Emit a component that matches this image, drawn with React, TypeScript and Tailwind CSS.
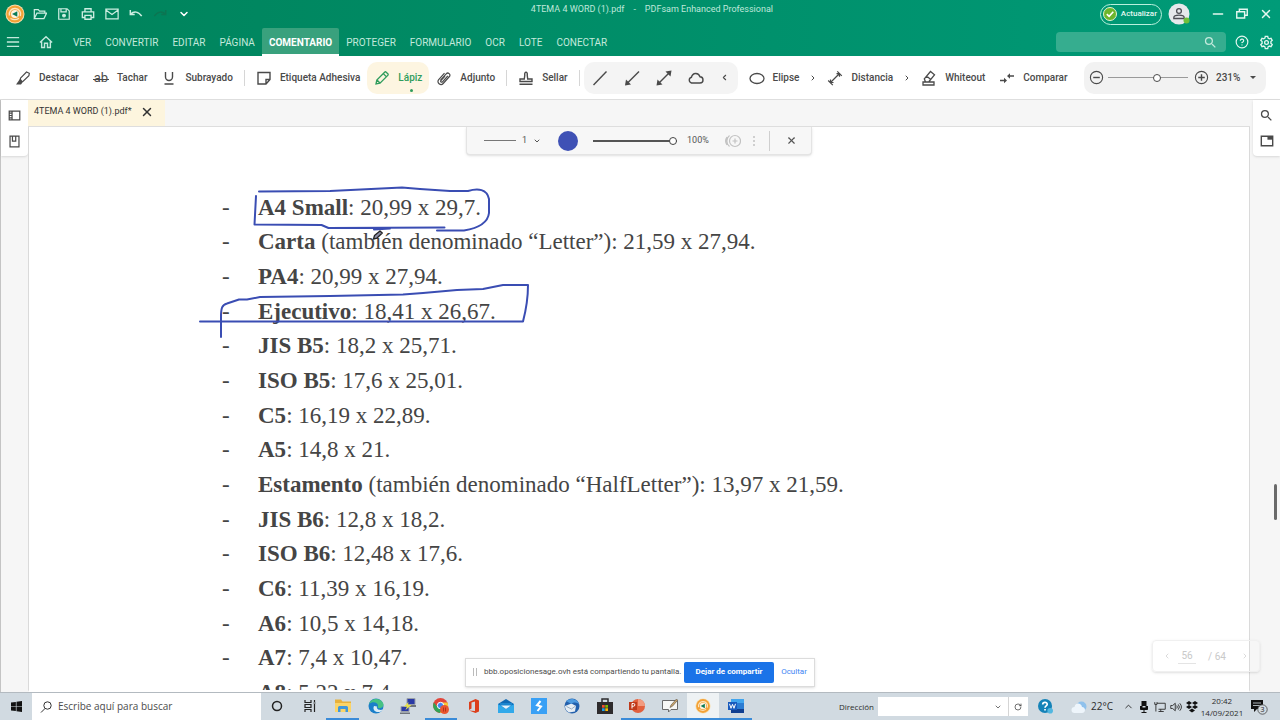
import React, { useState } from 'react';
import {
  ChevronDown,
  ChevronLeft,
  ChevronRight,
  ChevronUp,
  CircleHelp,
  Minus,
  RotateCw,
  X,
} from 'lucide-react';
import { MdSearch } from 'react-icons/md';

interface IIcon {
  children: React.ReactNode;
  className?: string;
}

interface ITool {
  label: string;
  icon: React.ReactNode;
  active?: boolean;
}

interface IPaperSize {
  name: string;
  text: string;
}

const menus = [
  'VER',
  'CONVERTIR',
  'EDITAR',
  'PÁGINA',
  'COMENTARIO',
  'PROTEGER',
  'FORMULARIO',
  'OCR',
  'LOTE',
  'CONECTAR',
];

const paperSizes: IPaperSize[] = [
  { name: 'A4 Small', text: ': 20,99 x 29,7.' },
  { name: 'Carta', text: ' (también denominado “Letter”): 21,59 x 27,94.' },
  { name: 'PA4', text: ': 20,99 x 27,94.' },
  { name: 'Ejecutivo', text: ': 18,41 x 26,67.' },
  { name: 'JIS B5', text: ': 18,2 x 25,71.' },
  { name: 'ISO B5', text: ': 17,6 x 25,01.' },
  { name: 'C5', text: ': 16,19 x 22,89.' },
  { name: 'A5', text: ': 14,8 x 21.' },
  {
    name: 'Estamento',
    text: ' (también denominado “HalfLetter”): 13,97 x 21,59.',
  },
  { name: 'JIS B6', text: ': 12,8 x 18,2.' },
  { name: 'ISO B6', text: ': 12,48 x 17,6.' },
  { name: 'C6', text: ': 11,39 x 16,19.' },
  { name: 'A6', text: ': 10,5 x 14,18.' },
  { name: 'A7', text: ': 7,4 x 10,47.' },
  { name: 'A8', text: ': 5,22 x 7,4.' },
];

const Icon: React.FC<IIcon> = ({ children, className = 'size-4' }) => (
  <svg
    viewBox="0 0 16 16"
    fill="none"
    stroke="currentColor"
    strokeWidth="1.2"
    className={`${className} flex-none`}
    aria-hidden="true"
  >
    {children}
  </svg>
);

const SamLogo: React.FC<{ className: string }> = ({ className }) => (
  <svg viewBox="0 0 20 20" className={className} aria-hidden="true">
    <circle cx="10" cy="10" r="9.5" fill="#f8dfae" />
    <circle cx="10" cy="10" r="8.6" fill="#f3a136" />
    <path
      d="M4.500 11.500a5.500 5.500 0 0 1 5.500-7a5.500 5.500 0 0 1 5.300 7.500"
      fill="none"
      stroke="#fbe6c2"
      strokeWidth="1.5"
    />
    <path d="M5.500 14.500q4.500 2.500 8.500-.3" fill="none" stroke="#fbe6c2" strokeWidth="1.2" />
    <circle cx="10" cy="10" r="4" fill="#fdf3df" />
    <path d="M12.300 7.200v5.600L7 10z" fill="#0b7a58" />
  </svg>
);

const Tool: React.FC<ITool> = ({ label, icon, active }) => (
  <button
    type="button"
    className={`relative flex h-8 flex-none items-center gap-2 rounded-[10px] px-[7px] text-[10px] font-medium ${
      active ? 'bg-[#fdf5e1] text-[#2f9c5c]' : 'text-[#4a4a4a]'
    }`}
  >
    {icon}
    {label}
    {active && (
      <span className="absolute right-4 bottom-0.5 size-[3px] rounded-full bg-[#2f9c5c]"></span>
    )}
  </button>
);

const Divider = () => <span className="mx-1 h-4 w-px flex-none bg-[#d6d6d6]"></span>;

const More: React.FC<{ label: string }> = ({ label }) => (
  <button
    type="button"
    aria-label={label}
    className="flex h-8 w-3.5 flex-none items-center justify-center"
  >
    <ChevronRight size={8} strokeWidth={3} />
  </button>
);

const TitleBar = () => (
  <div className="flex h-7 items-center">
    <div className="flex w-[204px] flex-none items-center pl-px text-[#cdeee2]">
      <span className="flex w-[27px] justify-center">
        <SamLogo className="size-5" />
      </span>
      <button type="button" aria-label="Abrir" className="flex w-6 justify-center">
        <Icon className="size-3.5">
          <path d="M1.500 13V3h4.500l1.500 1.700h6V7M1.500 13.200l3-6.200h11l-3 6.200z" strokeWidth="1.4" />
        </Icon>
      </button>
      <button type="button" aria-label="Guardar" className="flex w-6 justify-center">
        <Icon className="size-3.5">
          <path d="M2 2h9.500L14 4.500V14H2zM4.500 2v3.500h6V2" strokeWidth="1.4" />
          <circle cx="8" cy="9.800" r="1.600" fill="currentColor" />
        </Icon>
      </button>
      <button type="button" aria-label="Imprimir" className="flex w-6 justify-center">
        <Icon className="size-3.5">
          <path
            d="M4.500 5V2h7v3M4.500 12H1.500V5.500h13V12h-3M4.500 9.500h7V14h-7z"
            strokeWidth="1.5"
          />
        </Icon>
      </button>
      <button type="button" aria-label="Correo" className="flex w-6 justify-center">
        <Icon className="size-3.5">
          <path d="M1 2.500h14v11H1zM1 3.500l7 5 7-5" strokeWidth="1.4" />
        </Icon>
      </button>
      <button type="button" aria-label="Deshacer" className="flex w-6 justify-center">
        <Icon className="size-3.5">
          <path d="M1.500 3.500v5h5M2 8c3.500-3.500 9-3 12.500 2.500" strokeWidth="1.7" />
        </Icon>
      </button>
      <button
        type="button"
        aria-label="Rehacer"
        disabled
        className="flex w-6 justify-center text-[#0c7552]"
      >
        <Icon className="size-3.5">
          <path d="M14.500 3.500v5h-5M14 8C10.500 4.500 5 5 1.500 10.500" strokeWidth="1.7" />
        </Icon>
      </button>
      <button
        type="button"
        aria-label="Personalizar"
        className="flex w-6 justify-center text-white"
      >
        <ChevronDown size={12} strokeWidth={3} />
      </button>
    </div>
    <h1 className="flex-1 pb-2 text-center text-[9px] whitespace-pre text-[#bfe8da]">
      4TEMA 4 WORD (1).pdf{'    -    '}PDFsam Enhanced Professional
    </h1>
    <div className="flex flex-none items-center text-[#e4f7f0]">
      <button
        type="button"
        className="flex h-[21px] items-center gap-1 rounded-full border border-[#b9f0dd] pr-1 pl-0.5 text-[8px] font-medium"
      >
        <svg viewBox="0 0 14 14" className="size-3.5" aria-hidden="true">
          <circle cx="7" cy="7" r="6.500" fill="#6db52c" stroke="#e2f3d2" />
          <path
            d="M3.800 7.200l2.300 2.200 4.200-4.700"
            fill="none"
            stroke="#fff"
            strokeWidth="1.6"
          />
        </svg>
        Actualizar
      </button>
      <button type="button" aria-label="Cuenta" className="ml-[5px] flex w-[23px] justify-center">
        <svg viewBox="0 0 22 22" className="size-[22px]" aria-hidden="true">
          <circle cx="11" cy="11" r="10.500" fill="#e6e8ec" />
          <circle cx="11" cy="8" r="2.400" fill="none" stroke="#4d4d55" strokeWidth="1.3" />
          <path
            d="M5.800 15.500v-.8c0-1.800 3-2.600 5.200-2.600s5.200.8 5.200 2.600v.8z"
            fill="none"
            stroke="#4d4d55"
            strokeWidth="1.3"
          />
          <circle cx="18.500" cy="17.500" r="3" fill="#6fbf3a" />
        </svg>
      </button>
      <button type="button" aria-label="Minimizar" className="ml-4 flex w-6 justify-center">
        <Minus size={16} strokeWidth={2} />
      </button>
      <button type="button" aria-label="Restaurar" className="flex w-6 justify-center">
        <Icon className="size-3.5">
          <path d="M5 5V2.500h9v7h-2.500M2 5.500h9v7H2z" strokeWidth="1.6" />
        </Icon>
      </button>
      <button type="button" aria-label="Cerrar" className="mr-0.5 flex w-6 justify-center">
        <X size={14} strokeWidth={2.5} />
      </button>
    </div>
  </div>
);

const MenuBar = () => {
  const [current, setCurrent] = useState('COMENTARIO');

  return (
    <nav className="flex h-7 items-center text-[10px] text-[#c3e9dc]">
      <button type="button" aria-label="Menú" className="flex w-[26px] justify-center">
        <Icon className="size-3.5">
          <path d="M1 3h14M1 8h14M1 13h14" strokeWidth="1.5" />
        </Icon>
      </button>
      <button type="button" aria-label="Inicio" className="flex w-10 justify-center">
        <Icon className="size-3.5">
          <path
            d="M1 8.500L8 2l7 6.500M3 7v7.300h3.300V9.500h3.400v4.800H13V7"
            strokeWidth="1.6"
          />
        </Icon>
      </button>
      {menus.map((menu) => (
        <button
          key={menu}
          type="button"
          onClick={() => setCurrent(menu)}
          className={`h-7 border-b-2 px-[7px] pt-0.5 ${
            current === menu
              ? 'rounded-t-xs border-white bg-[#39a17d] font-bold text-white'
              : 'border-transparent'
          }`}
        >
          {menu}
        </button>
      ))}
      <div className="ml-auto flex h-5 w-[170px] items-center rounded-sm bg-[#36ad8f] pr-2">
        <input
          type="text"
          aria-label="Buscar herramienta"
          className="min-w-0 flex-1 bg-transparent px-2 outline-none"
        />
        <MdSearch size={15} />
      </div>
      <button
        type="button"
        aria-label="Ayuda"
        className="ml-1 flex w-6 justify-center text-[#e4f7f0]"
      >
        <CircleHelp size={14} strokeWidth={2} />
      </button>
      <button
        type="button"
        aria-label="Ajustes"
        className="mr-0.5 flex w-6 justify-center text-[#e4f7f0]"
      >
        <Icon className="size-[15px]">
          <path
            d="M6.700 1.500h2.600l.4 1.900 1.300.7 1.800-.6 1.300 2.200-1.400 1.300v1.900l1.400 1.300-1.300 2.200-1.800-.6-1.300.8-.4 1.900H6.700l-.4-1.900-1.300-.8-1.800.6-1.300-2.200 1.400-1.300V7L1.900 5.700l1.300-2.200 1.800.6 1.300-.7z"
            strokeWidth="1.4"
          />
          <circle cx="8" cy="8" r="2" strokeWidth="1.4" />
        </Icon>
      </button>
    </nav>
  );
};

const CommentTools = () => (
  <div className="flex h-11 items-center border-b border-[#dedede] bg-white pl-2 text-[#4a4a4a]">
    <Tool
      label="Destacar"
      icon={
        <Icon>
          <path d="M5.500 8.200L11.500 2l2.800 1.300-.4 2.500-6 5.700-3 .3z" />
          <path d="M5.300 8.500L1 14.500h5l2-2.700z" fill="currentColor" stroke="none" />
        </Icon>
      }
    />
    <Tool
      label="Tachar"
      icon={
        <span
          className="relative flex w-4 justify-center text-[13px] leading-4 font-normal"
          aria-hidden="true"
        >
          ab
          <span className="absolute inset-x-0 top-[9px] h-px bg-[#4a4a4a]"></span>
        </span>
      }
    />
    <Tool
      label="Subrayado"
      icon={
        <Icon>
          <path d="M4.500 2v5a3.500 3.500 0 0 0 7 0V2M3.500 14h9" strokeWidth="1.4" />
        </Icon>
      }
    />
    <Divider />
    <Tool
      label="Etiqueta Adhesiva"
      icon={
        <Icon>
          <path d="M2 2.500h12v7L10 14H2zM14 9.500h-4V14" strokeWidth="1.4" />
        </Icon>
      }
    />
    <Tool
      label="Lápiz"
      active
      icon={
        <Icon>
          <path
            d="M2 14l.8-4L10.600 2.200q.8-.8 1.600 0l1.600 1.600q.8.800 0 1.600L6 13.200zM9.300 3.600l3.100 3.100M3 10l3 3"
            strokeWidth="1.3"
          />
        </Icon>
      }
    />
    <Tool
      label="Adjunto"
      icon={
        <Icon>
          <path d="M4.500 10.200l5.700-6.400c1.800-2 5 .6 3.200 2.700l-6.200 7c-2.500 2.800-7-.8-4.500-3.800L8.500 3.200M11.800 5.800l-5.300 6c-.9 1-2.500-.2-1.600-1.300L9 6" />
        </Icon>
      }
    />
    <Divider />
    <Tool
      label="Sellar"
      icon={
        <Icon>
          <path
            d="M6.300 9l.5-4c-.9-3.600 3.300-3.600 2.400 0l.5 4h4.300v2.500H2V9zM1.500 14.300h13"
            strokeWidth="1.4"
          />
        </Icon>
      }
    />
    <Divider />
    <div className="flex h-8 flex-none items-center rounded-[10px] bg-[#f4f4f4]">
      <button type="button" aria-label="Línea" className="flex w-8 justify-center">
        <Icon>
          <path d="M1.500 15L14.500 1.500" strokeWidth="1.4" />
        </Icon>
      </button>
      <button type="button" aria-label="Flecha" className="flex w-8 justify-center">
        <Icon>
          <path d="M2 14.500L15 1.500" strokeWidth="1.4" />
          <path d="M1 15.500l1-6 5 5z" fill="currentColor" stroke="none" />
        </Icon>
      </button>
      <button type="button" aria-label="Flecha doble" className="flex w-8 justify-center">
        <Icon>
          <path d="M2 14L14 2" strokeWidth="1.4" />
          <path
            d="M.5 15.500l1-6 5 5zM15.500.5l-1 6-5-5z"
            fill="currentColor"
            stroke="none"
          />
        </Icon>
      </button>
      <button type="button" aria-label="Nube" className="flex w-8 justify-center">
        <Icon>
          <path
            d="M3.500 13a3 3 0 0 1 0-5.800C4.500 2.500 10.500 2 12 6.800c4 .2 4 6.200 0 6.200z"
            strokeWidth="1.4"
          />
        </Icon>
      </button>
      <button
        type="button"
        aria-label="Menos formas"
        className="flex w-[26px] justify-center"
      >
        <ChevronLeft size={9} strokeWidth={3} />
      </button>
    </div>
    <span className="w-1 flex-none"></span>
    <Tool
      label="Elipse"
      icon={
        <Icon>
          <ellipse cx="8" cy="8.500" rx="7" ry="5" strokeWidth="1.3" />
        </Icon>
      }
    />
    <More label="Más formas" />
    <Tool
      label="Distancia"
      icon={
        <Icon>
          <path d="M4 12l8-8M1.200 10.500l4.600 4.600M10.300 1.300l4.500 4.500M3.500 9.500v3h3M9.500 3.700h3v3" />
        </Icon>
      }
    />
    <More label="Más medidas" />
    <Tool
      label="Whiteout"
      icon={
        <Icon>
          <path
            d="M2 12h11v3H2zM4.500 12L3.300 8.800 9.500 1.500l4 3.300L8 11.500M5.500 6l4.300 3.500"
            strokeWidth="1.3"
          />
        </Icon>
      }
    />
    <Tool
      label="Comparar"
      icon={
        <Icon>
          <path d="M1 10.500h5M15 6h-5" strokeWidth="1.4" />
          <path
            d="M5 7.700l3 2.800-3 2.800zM11 3.200L8 6l3 2.800z"
            fill="currentColor"
            stroke="none"
          />
        </Icon>
      }
    />
    <div className="mr-3.5 ml-auto flex h-8 w-[182px] flex-none items-center rounded-[10px] bg-[#f2f2f2] pr-1 text-[10px]">
      <button type="button" aria-label="Alejar" className="flex w-6 justify-center">
        <Icon className="size-[15px]">
          <circle cx="8" cy="8" r="6.500" />
          <path d="M4.500 8h7" strokeWidth="1.5" />
        </Icon>
      </button>
      <input
        type="range"
        aria-label="Zoom"
        defaultValue={63}
        className="h-px w-20 appearance-none bg-[#9a9a9a] [&::-webkit-slider-thumb]:size-2 [&::-webkit-slider-thumb]:appearance-none [&::-webkit-slider-thumb]:rounded-full [&::-webkit-slider-thumb]:border [&::-webkit-slider-thumb]:border-[#4a4a4a] [&::-webkit-slider-thumb]:bg-white"
      />
      <button type="button" aria-label="Acercar" className="ml-1 flex w-[18px] justify-center">
        <Icon className="size-[15px]">
          <circle cx="8" cy="8" r="6.500" />
          <path d="M4.500 8h7M8 4.500v7" strokeWidth="1.5" />
        </Icon>
      </button>
      <button
        type="button"
        className="flex flex-1 items-center justify-between px-1.5 font-medium"
      >
        231%
        <svg viewBox="0 0 8 4" className="h-[3px] w-1.5" aria-hidden="true">
          <path d="M0 0h8L4 4z" fill="currentColor" />
        </svg>
      </button>
    </div>
  </div>
);

const PenOptions = () => (
  <div className="absolute top-0 left-1/2 flex h-7 w-[346px] -translate-x-1/2 items-center rounded-b-sm border border-t-0 border-[#e4e4e4] bg-[#f7f7f7] text-[9px] text-[#555] shadow-sm">
    <button type="button" aria-label="Grosor 1" className="ml-[17px] flex items-center gap-1.5">
      <span className="h-px w-8 bg-[#777]"></span>
      <span>1</span>
      <ChevronDown size={8} strokeWidth={3} />
    </button>
    <button
      type="button"
      aria-label="Color"
      className="ml-[17px] size-5 flex-none rounded-full bg-[#3f51b5]"
    ></button>
    <input
      type="range"
      aria-label="Opacidad"
      defaultValue={100}
      className="ml-[15px] h-0.5 w-[84px] appearance-none bg-[#555] [&::-webkit-slider-thumb]:size-2 [&::-webkit-slider-thumb]:appearance-none [&::-webkit-slider-thumb]:rounded-full [&::-webkit-slider-thumb]:border [&::-webkit-slider-thumb]:border-[#444] [&::-webkit-slider-thumb]:bg-white"
    />
    <span className="ml-2.5">100%</span>
    <button type="button" disabled aria-label="Añadir favorito" className="ml-4 text-[#c2c2c2]">
      <Icon>
        <circle cx="10" cy="8" r="5.500" />
        <path d="M7.500 8h5M10 5.500v5M4.500 2.500a7 7 0 0 0 0 11M2 4a7 7 0 0 0 0 8" />
      </Icon>
    </button>
    <span className="ml-3 flex flex-col gap-0.5">
      <span className="size-0.5 bg-[#cfcfcf]"></span>
      <span className="size-0.5 bg-[#cfcfcf]"></span>
      <span className="size-0.5 bg-[#cfcfcf]"></span>
    </span>
    <span className="ml-3.5 h-5 w-px bg-[#cfcfcf]"></span>
    <button type="button" aria-label="Cerrar opciones" className="ml-4">
      <X size={11} strokeWidth={2.5} />
    </button>
  </div>
);

// hand drawn marks of the presenter, plus the pencil pointer
const Annotations = () => (
  <svg
    viewBox="0 0 360 170"
    className="absolute top-[53px] left-[161px] h-[170px] w-[360px]"
    fill="none"
    stroke="#3a4db3"
    strokeWidth="2"
    strokeLinecap="round"
    strokeLinejoin="round"
    aria-hidden="true"
  >
    <path d="M69 11.500L140 11l72-3.500 18 1.500 30 2h18c10-3 19-2 21 8v14c-1 9-10 15-25 17.500h-27" />
    <path d="M66 16l-1.500 28.500 67 .5 7 3 116-.500M184 49.500l16-1" />
    <path d="M31 157v-20c0-9 1-12 6-13.500l12-4h8l13-2.500 70-1 73-1.500 20-1.500 34-3 26-1 20-4h25c0 13-2 25-5 36.500H10" />
    <path
      d="M183.500 59l1-3.500 5.500-4.500 2.300 2-5.300 5z"
      stroke="#222"
      strokeWidth="1.3"
      fill="#8c8ea8"
    />
  </svg>
);

const SharingNotice = () => (
  <div className="absolute bottom-[5px] left-1/2 flex h-[29px] w-[350px] -translate-x-1/2 items-center border border-[#dcdcdc] bg-white pb-px text-[8px] whitespace-nowrap text-[#4c4c4c] shadow">
    <span className="mx-[7px] h-2 w-1 border-x border-[#bbb]"></span>
    <p className="flex-1">bbb.oposicionesage.ovh está compartiendo tu pantalla.</p>
    <button
      type="button"
      className="h-[21px] w-[90px] flex-none rounded-xs bg-[#1a73e8] font-bold text-white"
    >
      Dejar de compartir
    </button>
    <button type="button" className="w-10 flex-none text-[#4285f4]">
      Ocultar
    </button>
  </div>
);

const PageNavigator = () => (
  <div className="absolute right-5 bottom-5 flex h-8 w-[108px] items-center justify-between rounded-sm border border-[#f0f0f0] px-2.5 text-[10px] text-[#c9c9c9] shadow-sm">
    <button type="button" aria-label="Página anterior">
      <ChevronLeft size={8} />
    </button>
    <label className="flex items-center gap-3">
      <input
        type="text"
        aria-label="Página"
        defaultValue="56"
        className="w-[18px] border-b border-[#e4e4e4] bg-transparent text-center outline-none"
      />
      <span>/ 64</span>
    </label>
    <button type="button" aria-label="Página siguiente" className="ml-2">
      <ChevronRight size={8} />
    </button>
  </div>
);

const Workspace = () => (
  <main className="relative flex min-h-0 flex-1 border-b border-[#b3bac0] bg-[#f6f6f6]">
    <aside className="w-7 flex-none border-l border-[#c4c4c4]">
      <div className="flex h-14 flex-col items-center justify-around rounded-br-sm bg-white py-0.5 text-[#4a4a4a] shadow">
        <button type="button" aria-label="Panel de páginas">
          <Icon className="size-[13px]">
            <path
              d="M1.500 2.500h13v11h-13zM5 2.500v11M1.500 5h3M1.500 8h3M1.500 11h3"
              strokeWidth="1.5"
            />
          </Icon>
        </button>
        <button type="button" aria-label="Marcadores">
          <Icon className="size-[13px]">
            <path d="M2.500 1.500h11v13h-11zM5.500 1.500v6h4v-6" strokeWidth="1.5" />
          </Icon>
        </button>
      </div>
    </aside>
    <section className="flex min-w-0 flex-1 flex-col">
      <div className="flex h-[27px] flex-none border-b border-[#dedede]">
        <div className="flex w-[137px] items-center gap-2 bg-[#fdf5de] pb-0.5 pl-1.5 text-[9px] text-[#333]">
          4TEMA 4 WORD (1).pdf*
          <button type="button" aria-label="Cerrar pestaña">
            <X size={14} strokeWidth={2.5} />
          </button>
        </div>
      </div>
      <div className="relative min-h-0 flex-1 overflow-hidden border-x border-b-2 border-x-[#dadada] border-b-white bg-white">
        <ul className="mt-[63px] ml-[193px] grid h-[520px] grid-rows-15 font-['Palatino_Linotype','Liberation_Serif',serif] text-[23px] leading-none text-[#454545]">
          {paperSizes.map(({ name, text }) => (
            <li key={name} className="flex items-center whitespace-pre">
              <span className="w-9">-</span>
              <p>
                <b>{name}</b>
                {text}
              </p>
            </li>
          ))}
        </ul>
        <Annotations />
        <PenOptions />
      </div>
    </section>
    <aside className="w-[30px] flex-none">
      <div className="ml-[3px] flex h-14 flex-col items-center justify-around rounded-bl-sm bg-white py-0.5 text-[#4a4a4a] shadow">
        <button type="button" aria-label="Buscar en el documento">
          <MdSearch size={15} />
        </button>
        <button type="button" aria-label="Panel de propiedades">
          <Icon className="size-3.5">
            <path d="M1.500 2.500h13v11h-13z" strokeWidth="1.6" />
            <path d="M8.500 2.500h6V6.500h-6z" fill="currentColor" stroke="none" />
          </Icon>
        </button>
      </div>
    </aside>
    <span className="absolute right-[3px] bottom-[172px] h-9 w-[3px] rounded-full bg-[#6a6a6a]"></span>
    <SharingNotice />
    <PageNavigator />
  </main>
);

interface ITaskApp {
  name: string;
  drawing: React.ReactNode;
  open?: boolean;
  focused?: boolean;
}

const taskApps: ITaskApp[] = [
  {
    name: 'Cortana',
    drawing: <circle cx="8" cy="8" r="4.500" fill="none" stroke="#222" strokeWidth="1.5" />,
  },
  {
    name: 'Vista de tareas',
    drawing: (
      <path
        d="M3 2v2.500h6V2M3 14v-2.500h6V14M3 6.500h6v3H3zM12.500 2v2M12.500 6v8M11.500 5h2"
        fill="none"
        stroke="#222"
        strokeWidth="1.2"
      />
    ),
  },
  {
    name: 'Explorador',
    open: true,
    drawing: (
      <>
        <path d="M0 1.500h6l1.500 2H16V14H0z" fill="#e8b13c" />
        <path d="M0 5h16v9H0z" fill="#fbd468" />
        <path d="M3 9.500q0-1.500 1.500-1.500h7Q13 8 13 9.500V14h-2.500v-3h-5v3H3z" fill="#3f97dc" />
      </>
    ),
  },
  {
    name: 'Edge',
    drawing: (
      <>
        <circle cx="8" cy="8" r="7.500" fill="#1b7fc9" />
        <path
          d="M1 6C2.500 0 13-1.500 15.500 6c.5 4-4 5-6 3.500C12 5 5 2 1 6z"
          fill="#46c283"
        />
        <path d="M6 8c-2 4 2 7.500 7 5.500l2-2c-3 1-7 0-6-3z" fill="#dcecf6" />
      </>
    ),
  },
  {
    name: 'PuTTY',
    drawing: (
      <>
        <path d="M7 .5h8v6H7zM1 8.500h8v5H1z" fill="#2a3aa6" stroke="#9aa0a8" />
        <path d="M8 9h8V7H8zM0 16h10v-1.500H0z" fill="#6f747c" />
        <path d="M8.500 4L4 8.500h3L5.500 12l6-5H8z" fill="#e6e04a" />
      </>
    ),
  },
  {
    name: 'Chrome',
    open: true,
    drawing: (
      <>
        <circle cx="7.500" cy="7.500" r="7.500" fill="#e2453a" />
        <path d="M.8 4.500A7.500 7.500 0 0 0 7 15l3-5-5.500-1z" fill="#33a457" />
        <path d="M8 4.500h6.500A7.500 7.500 0 0 1 7 15l3.500-6z" fill="#f8c83a" />
        <circle cx="7.500" cy="7.500" r="3.200" fill="#4285f4" stroke="#fff" />
        <circle cx="11.500" cy="11.500" r="4.500" fill="#e9552f" />
        <path d="M10.500 9.500v4M12.500 9.500v4" stroke="#b5331a" />
      </>
    ),
  },
  {
    name: 'Office',
    drawing: (
      <path
        d="M3 4l6.500-3L13 2.500v11L9.500 15 3 12.500l6 .5V3.500L5.500 4.500v6L3 12z"
        fill="#dc3f1c"
      />
    ),
  },
  {
    name: 'Correo',
    drawing: (
      <>
        <path d="M0 6l8-5 8 5v9H0z" fill="#0f69b4" />
        <path d="M2 5h12v4H2z" fill="#1c86cf" />
        <path d="M0 6l8 5 8-5v9H0z" fill="#31a9ea" />
        <path d="M3 7.500h10L8 11z" fill="#e6f3fb" />
      </>
    ),
  },
  {
    name: 'Accesos',
    drawing: (
      <>
        <path d="M0 0h16v16H0z" fill="#39a0f5" />
        <path
          d="M9.500 3L6 7.300l4 1.200L6.500 13"
          fill="none"
          stroke="#fff"
          strokeWidth="2"
        />
      </>
    ),
  },
  {
    name: 'Thunderbird',
    drawing: (
      <>
        <circle cx="8" cy="8" r="7.500" fill="#2360ac" />
        <path d="M1 8l6.500-2.500L12 8l-1 5.500-6 1Q1 12 1 8z" fill="#e6edf3" />
        <path d="M2 3c5-4 12-2 13.500 4-2-3-6-3-8-1z" fill="#4d9be0" />
        <path d="M2.500 8.500l5 2.500L11.500 8" fill="none" stroke="#9aaec2" />
      </>
    ),
  },
  {
    name: 'Microsoft Store',
    drawing: (
      <>
        <path d="M0 4h16v12H0z" fill="#2d2b2c" />
        <path d="M5 4V1h6v3" fill="none" stroke="#2d2b2c" strokeWidth="1.5" />
        <path d="M5 7h2.700v2.700H5z" fill="#f1502f" />
        <path d="M8.300 7H11v2.700H8.300z" fill="#7fba00" />
        <path d="M5 10.300h2.700V13H5z" fill="#20a0e8" />
        <path d="M8.300 10.300H11V13H8.300z" fill="#ffb900" />
      </>
    ),
  },
  {
    name: 'PowerPoint',
    open: true,
    drawing: (
      <>
        <circle cx="9" cy="8" r="7" fill="#e2603d" />
        <path d="M9 1a7 7 0 0 1 7 7H9z" fill="#f29b7f" />
        <path d="M0 4h8v8H0z" fill="#bf3a1b" />
        <path d="M3 10.500v-5h1.500a1.300 1.300 0 0 1 0 2.700H3" fill="none" stroke="#fff" />
      </>
    ),
  },
  {
    name: 'Pizarra',
    open: true,
    drawing: (
      <>
        <path d="M.5 2.500h15v9H9L6.500 14v-2.500h-6z" fill="#f7f7f5" stroke="#6a6a6a" />
        <path
          d="M8 9.500l1-2.500 5.500-6 1.200 1.200-5.200 6z"
          fill="#caa56a"
          stroke="#5a5348"
          strokeWidth=".6"
        />
      </>
    ),
  },
  { name: 'PDFsam', open: true, focused: true, drawing: null },
  {
    name: 'Word',
    open: true,
    drawing: (
      <>
        <path d="M3 1h13v14H3z" fill="#2b7cd3" />
        <path d="M3 1h13v4H3z" fill="#41a5ee" />
        <path d="M3 11h13v4H3z" fill="#103f91" />
        <path d="M0 4h9v8H0z" fill="#185abd" />
        <path d="M1.500 5.800L3 10.300l1.500-4 1.500 4 1.500-4.500" fill="none" stroke="#fff" />
      </>
    ),
  },
];

const Taskbar = () => (
  <footer className="flex h-[27px] flex-none items-center bg-[#d1dae1] font-['Open_Sans','Noto_Sans',sans-serif] text-[#2c2c2c]">
    <button
      type="button"
      aria-label="Inicio de Windows"
      className="flex w-8 flex-none justify-center"
    >
      <svg viewBox="0 0 12 12" className="size-[11px]" aria-hidden="true">
        <path
          d="M0 1.700l5.300-.7v4.700H0zM6 .9L12 0v5.700H6zM0 6.300h5.300V11L0 10.300zM6 6.300h6V12l-6-.9z"
          fill="#111"
        />
      </svg>
    </button>
    <label className="flex h-[27px] w-[229px] items-center gap-1.5 bg-white pl-2">
      <svg
        viewBox="0 0 12 12"
        className="size-3"
        fill="none"
        stroke="#333"
        aria-hidden="true"
      >
        <circle cx="7.500" cy="4.500" r="3.700" />
        <path d="M5 7.500L1 11.500" />
      </svg>
      <input
        type="text"
        aria-label="Buscar"
        placeholder="Escribe aquí para buscar"
        className="min-w-0 flex-1 text-[10px] outline-none placeholder:text-[#4c4c4c]"
      />
    </label>
    <div className="grid h-[27px] w-[491px] flex-none grid-cols-15">
      {taskApps.map(({ name, drawing, open, focused }) => (
        <button
          key={name}
          type="button"
          aria-label={name}
          className={`flex items-center justify-center border-b-2 ${
            open ? 'border-[#3a8bd8]' : 'border-transparent'
          } ${focused ? 'bg-[#eef2f4]' : ''}`}
        >
          {drawing ? (
            <svg viewBox="0 0 16 16" className="size-4" aria-hidden="true">
              {drawing}
            </svg>
          ) : (
            <SamLogo className="size-4" />
          )}
        </button>
      ))}
    </div>
    <div className="ml-auto flex flex-none items-center">
      <label htmlFor="direccion" className="mr-1 text-[8px]">
        Dirección
      </label>
      <div className="flex h-[19px] w-[150px] items-center bg-white">
        <input
          id="direccion"
          type="text"
          className="min-w-0 flex-1 px-1 text-[8px] outline-none"
        />
        <button type="button" aria-label="Historial" className="flex w-5 justify-center">
          <ChevronDown size={8} />
        </button>
        <button
          type="button"
          aria-label="Recargar"
          className="flex h-[19px] w-5 items-center justify-center border-l border-[#d5d5d5]"
        >
          <RotateCw size={8} />
        </button>
      </div>
      <button type="button" aria-label="Obtener ayuda" className="ml-2.5 flex w-4 justify-center">
        <svg viewBox="0 0 16 16" className="size-[15px]" aria-hidden="true">
          <circle cx="7.500" cy="7.500" r="7.500" fill="#1583b8" />
          <path
            d="M5 5.800c.2-3 5-2.800 4.800 0C9.700 7.300 7.500 7.300 7.500 9.200M7.500 10.700v1.600"
            fill="none"
            stroke="#fff"
            strokeWidth="1.8"
          />
          <circle cx="13" cy="12.500" r="3" fill="#52b7e0" />
        </svg>
      </button>
      <button type="button" className="ml-[17px] flex items-center gap-1 text-[10px]">
        <svg viewBox="0 0 16 12" className="h-3 w-4" aria-hidden="true">
          <circle cx="10.500" cy="5.500" r="5" fill="#8fc1ec" />
          <path d="M3.500 12a3 3 0 0 1 0-6c1-5 7-4 7.500 0 4 0 4 6 0 6z" fill="#eef5fb" />
        </svg>
        22°C
      </button>
      <button type="button" aria-label="Iconos ocultos" className="ml-2.5">
        <ChevronUp size={11} strokeWidth={2} />
      </button>
      <button type="button" aria-label="Micrófono" className="ml-1">
        <svg viewBox="0 0 12 12" className="size-3" aria-hidden="true">
          <path d="M4 0h4v7H4zM2.500 5v3.500h7V5M6 8v4M3.500 11.500h5" fill="#111" stroke="#111" />
        </svg>
      </button>
      <button type="button" aria-label="Red" className="ml-1">
        <Icon className="size-3">
          <path d="M4 3h11v8H6M9 11v3M6 14h7M1 1.500v3h3v-3M2.500 4.500V14" />
        </Icon>
      </button>
      <button type="button" aria-label="Volumen" className="ml-1">
        <Icon className="size-3">
          <path d="M1 6v4h2.500L7 13V3L3.500 6zM9 6q1.500 2 0 4M11 4.500q3 3.500 0 7M13 3q4.500 5 0 10" />
        </Icon>
      </button>
      <button type="button" aria-label="Dropbox" className="ml-1">
        <svg viewBox="0 0 12 12" className="size-3" fill="#111" aria-hidden="true">
          <path d="M3 0l3 2-3 2-3-2zM9 0l3 2-3 2-3-2zM3 4l3 2-3 2-3-2zM9 4l3 2-3 2-3-2zM6 7.500l3 2-3 2-3-2z" />
        </svg>
      </button>
      <div className="w-12 text-center text-[8px] leading-3">
        <p>20:42</p>
        <p>14/09/2021</p>
      </div>
      <button type="button" aria-label="3 notificaciones" className="mr-3 ml-1">
        <svg viewBox="0 0 18 16" className="h-4 w-[18px]" aria-hidden="true">
          <path d="M1 1h12v9H7l-3 3v-3H1z" fill="#111" />
          <path d="M3 4h8M3 6.500h8" stroke="#d1dae1" strokeWidth=".8" />
          <circle cx="12.500" cy="10.500" r="4.700" fill="#d1dae1" stroke="#444" strokeWidth=".8" />
          <text x="12.500" y="13" textAnchor="middle" fontSize="7" fill="#222">
            3
          </text>
        </svg>
      </button>
    </div>
  </footer>
);

const App: React.FC = () => (
  <div className="flex h-screen flex-col overflow-hidden bg-white font-[Roboto,sans-serif]">
    <header className="flex-none bg-linear-to-r from-[#00825a] to-[#009b78]">
      <TitleBar />
      <MenuBar />
    </header>
    <CommentTools />
    <Workspace />
    <Taskbar />
  </div>
);

export default App;
